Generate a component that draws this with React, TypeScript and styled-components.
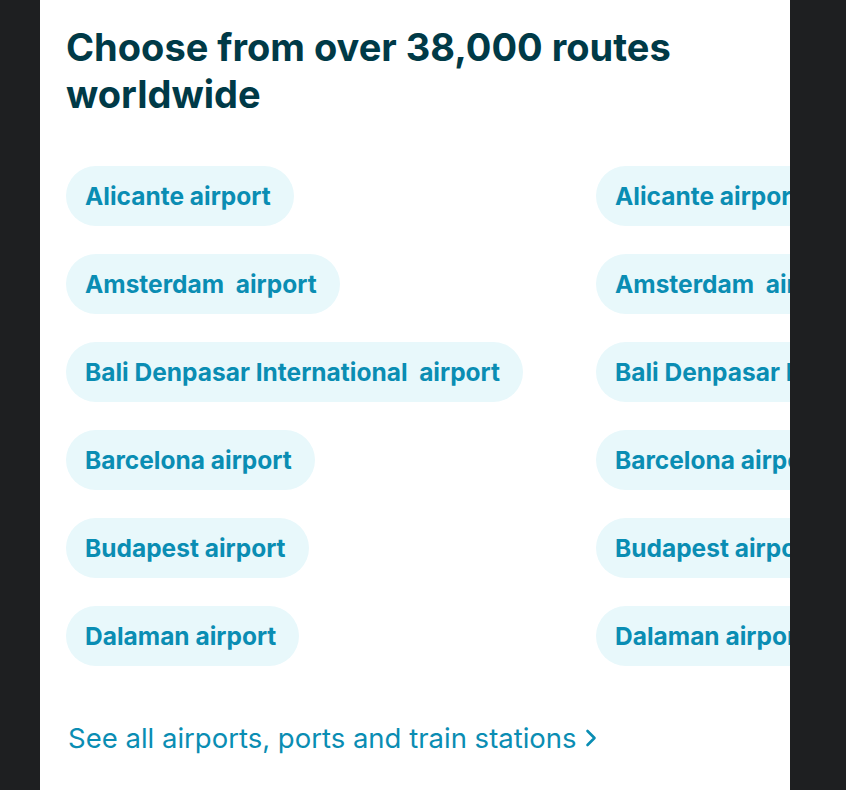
import React from "react";
import styled, { createGlobalStyle } from "styled-components";

const GlobalStyle = createGlobalStyle`
  html, body {
    margin: 0;
    padding: 0;
    background: #1e1f21;
    font-family: "Inter", "Liberation Sans", sans-serif;
  }
`;

const airports = [
  "Alicante airport",
  "Amsterdam\u00a0 airport",
  "Bali Denpasar International\u00a0 airport",
  "Barcelona airport",
  "Budapest airport",
  "Dalaman airport",
];

const App = () => {
  return (
    <>
      <GlobalStyle />
      <Page>
        <Panel>
          <Heading>Choose from over 38,000 routes worldwide</Heading>
          <Columns>
            {[0, 1].map((col) => (
              <Column key={col}>
                {airports.map((name) => (
                  <Pill key={name}>{name}</Pill>
                ))}
              </Column>
            ))}
          </Columns>
          <SeeAll href="#">
            See all airports, ports and train stations
            <svg width="14" height="22" viewBox="0 0 14 22" fill="none">
              <path
                d="M3.5 4l7 7-7 7"
                stroke="currentColor"
                strokeWidth="2.6"
                strokeLinecap="round"
                strokeLinejoin="round"
              />
            </svg>
          </SeeAll>
        </Panel>
      </Page>
    </>
  );
};

const Page = styled.div`
  height: 790px;
  padding-left: 40px;
  overflow: hidden;
`;

const Panel = styled.div`
  width: 750px;
  height: 790px;
  background: #ffffff;
  box-sizing: border-box;
  padding: 24px 0 0 26px;
  overflow: hidden;
`;

const Heading = styled.h2`
  margin: 0;
  width: 660px;
  font-size: 38px;
  line-height: 47px;
  font-weight: 700;
  color: #003a47;
`;

const Columns = styled.div`
  display: flex;
  margin-top: 48px;
`;

const Column = styled.div`
  flex: 0 0 530px;
  display: flex;
  flex-direction: column;
  align-items: flex-start;
  gap: 28px;
`;

const Pill = styled.div`
  height: 60px;
  display: flex;
  align-items: center;
  padding: 0 23px 0 19px;
  border-radius: 30px;
  background: #e8f8fb;
  color: #0a8db3;
  font-size: 24.5px;
  font-weight: 700;
  white-space: nowrap;
`;

const SeeAll = styled.a`
  display: inline-flex;
  align-items: center;
  gap: 7px;
  margin-top: 55px;
  margin-left: 2px;
  color: #0a8db3;
  font-size: 27.5px;
  text-decoration: none;
`;

export default App;
